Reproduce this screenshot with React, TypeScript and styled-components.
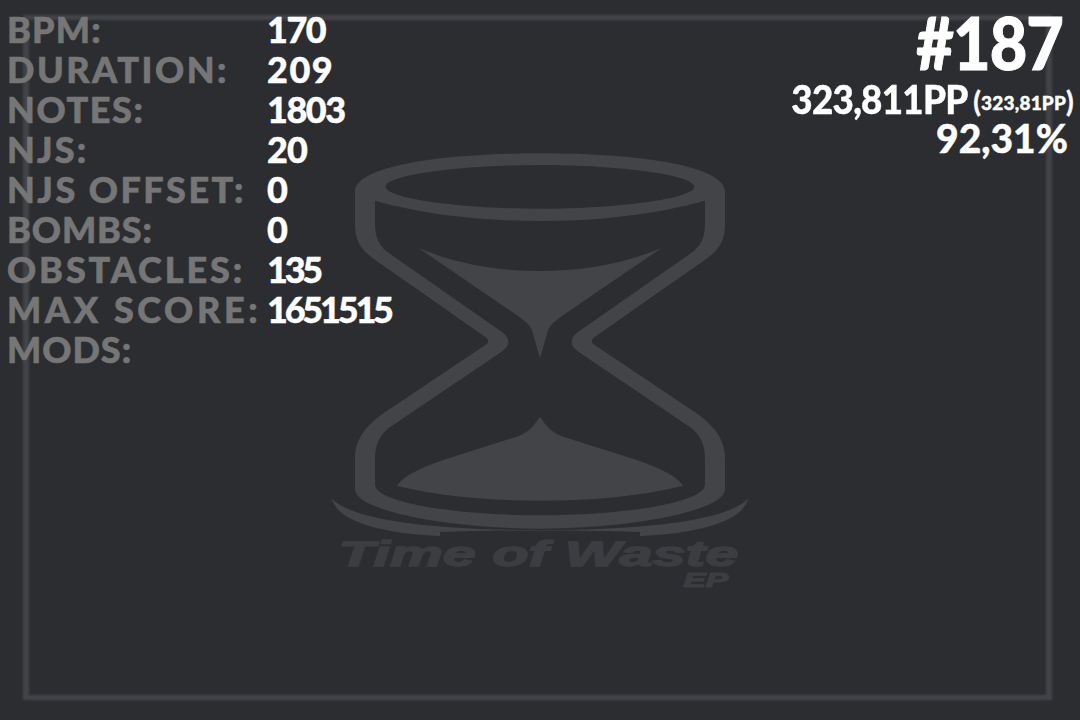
import React from 'react'
import styled, {createGlobalStyle} from 'styled-components'

const GlobalStyle = createGlobalStyle`
  html, body {
    margin: 0;
    padding: 0;
    background: #2c2d31;
  }
`

const Page = styled.div`
  position: relative;
  width: 1080px;
  height: 720px;
  overflow: hidden;
  background: #2c2d31;
  font-family: "Lato", "Liberation Sans", sans-serif;
  font-weight: 900;
`

const Frame = styled.div`
  position: absolute;
  left: 23px;
  top: 15px;
  width: 1029px;
  height: 685px;
  box-sizing: border-box;
  border-style: solid;
  border-width: 5px 6px;
  border-color: #434448;
  filter: blur(0.8px);
`

const Logo = styled.svg`
  position: absolute;
  left: 320px;
  top: 150px;
  width: 440px;
  height: 450px;
`

const Overlay = styled.div`
  position: relative;
  display: flex;
  justify-content: space-between;
  align-items: flex-start;
  padding: 9px 12px 0 7px;
`

const StatGrid = styled.div`
  display: grid;
  grid-template-columns: 260px auto;
  grid-auto-rows: 40px;
  align-items: center;
`

const StatLabel = styled.div<{$spacing: number}>`
  color: #767676;
  font-size: 36px;
  line-height: 40px;
  white-space: nowrap;
  letter-spacing: ${p => p.$spacing}px;
  -webkit-text-stroke: 0.6px #767676;
`

const StatValue = styled.div<{$spacing: number}>`
  color: #fff;
  font-size: 36px;
  line-height: 40px;
  letter-spacing: ${p => p.$spacing}px;
  -webkit-text-stroke: 0.4px #fff;
`

const Score = styled.div`
  display: flex;
  flex-direction: column;
  align-items: flex-end;
  color: #fff;
`

const Rank = styled.div`
  font-size: 72px;
  line-height: 72px;
  margin-top: -3px;
  margin-right: 5px;
  letter-spacing: -1px;
  -webkit-text-stroke: 1px #fff;
  transform: scaleX(0.9);
  transform-origin: right center;
`

const PpLine = styled.div`
  display: flex;
  align-items: baseline;
  gap: 6px;
  font-size: 40px;
  line-height: 32px;
  margin-top: 5px;
  margin-right: -6px;
  -webkit-text-stroke: 0.4px #fff;
`

const PpTotal = styled.span`
  letter-spacing: -0.8px;
  transform: scaleX(0.92);
  transform-origin: right center;
`

const PpRaw = styled.span`
  font-size: 19px;
  letter-spacing: 0.2px;
  position: relative;
  top: -4px;
`

const PpParen = styled.span`
  font-size: 28px;
  font-weight: 700;
  position: relative;
  top: 2px;
`

const Accuracy = styled.div`
  font-size: 39px;
  line-height: 40px;
  margin-top: -5px;
  -webkit-text-stroke: 0.4px #fff;
`

const stats: [string, string, number, number][] = [
  ['BPM:', '170', 1.2, -1.5],
  ['DURATION:', '209', 2.5, 1.5],
  ['NOTES:', '1803', 1.6, -1.5],
  ['NJS:', '20', 2.2, -1],
  ['NJS OFFSET:', '0', 2.5, -1.5],
  ['BOMBS:', '0', 0.9, -1.5],
  ['OBSTACLES:', '135', 2.9, -3.2],
  ['MAX SCORE:', '1651515', 3.6, -3.2],
  ['MODS:', '', 1, 0],
]

const HourglassLogo = () => (
  <Logo viewBox="0 0 1320 1350" fill="#434448">
    <path
      fillRule="evenodd"
      d="M105 125 C105 50 350 10 660 10 C970 10 1215 50 1215 125 L1215 230 C1213 280 1190 305 1150 333 L825 560 C812 570 812 578 825 586 L1130 790 C1185 830 1215 870 1215 925 L1215 1020 C1205 1090 900 1136 660 1136 C420 1136 115 1090 105 1020 L105 925 C105 870 135 830 190 790 L495 586 C508 578 508 570 495 560 L170 333 C130 305 107 280 105 230 Z
      M197 110 C197 145 420 176 660 176 C900 176 1123 145 1123 110 C1123 75 900 45 660 45 C420 45 197 75 197 110 Z
      M165 152 L165 230 C167 265 180 290 205 308 L545 545 C572 565 572 585 545 605 L205 835 C180 855 165 885 165 925 L165 1005 C170 1060 420 1096 660 1096 C900 1096 1150 1060 1155 1005 L1155 925 C1155 885 1140 855 1115 835 L775 605 C748 585 748 565 775 545 L1115 308 C1140 290 1153 265 1155 230 L1155 152 C1000 195 830 213 660 213 C490 213 320 195 165 152 Z"
    />
    <path d="M297 295 C420 345 540 363 660 363 C780 363 900 345 1023 295 L730 495 C695 520 685 530 680 555 L660 625 L640 555 C635 530 625 520 590 495 Z" />
    <path d="M660 800 C680 830 695 848 730 860 L950 930 C1020 955 1065 975 1090 1007 C960 1040 800 1052 660 1052 C520 1052 360 1040 230 1007 C255 975 300 955 370 930 L590 860 C625 848 640 830 660 800 Z" />
    <path d="M35 1045 C90 1105 300 1140 660 1140 C1020 1140 1230 1105 1285 1045 C1270 1110 1150 1150 960 1158 L360 1158 C170 1150 50 1110 35 1045 Z" />
    <path fill="#2c2d31" d="M360 1158 L960 1158 L960 1146 C800 1140 520 1140 360 1146 Z" />
    <text
      x="55"
      y="1248"
      fill="#3c3d41"
      stroke="#3c3d41"
      strokeWidth="4"
      fontFamily="'Liberation Sans', sans-serif"
      fontWeight="700"
      fontStyle="italic"
      fontSize="106"
      textLength="1200"
      lengthAdjust="spacingAndGlyphs"
    >
      Time of Waste
    </text>
    <text
      x="1090"
      y="1310"
      fill="#3c3d41"
      stroke="#3c3d41"
      strokeWidth="3"
      fontFamily="'Liberation Sans', sans-serif"
      fontWeight="700"
      fontStyle="italic"
      fontSize="60"
      textLength="135"
      lengthAdjust="spacingAndGlyphs"
    >
      EP
    </text>
  </Logo>
)

export default function App() {
  return (
    <Page>
      <GlobalStyle />
      <Frame />
      <HourglassLogo />
      <Overlay>
        <StatGrid>
          {stats.map(([label, value, labelSpacing, valueSpacing]) => (
            <React.Fragment key={label}>
              <StatLabel $spacing={labelSpacing}>{label}</StatLabel>
              <StatValue $spacing={valueSpacing}>{value}</StatValue>
            </React.Fragment>
          ))}
        </StatGrid>
        <Score>
          <Rank>#187</Rank>
          <PpLine>
            <PpTotal>323,811PP</PpTotal>
            <PpRaw>
              <PpParen>(</PpParen>323,81PP<PpParen>)</PpParen>
            </PpRaw>
          </PpLine>
          <Accuracy>92,31%</Accuracy>
        </Score>
      </Overlay>
    </Page>
  )
}
